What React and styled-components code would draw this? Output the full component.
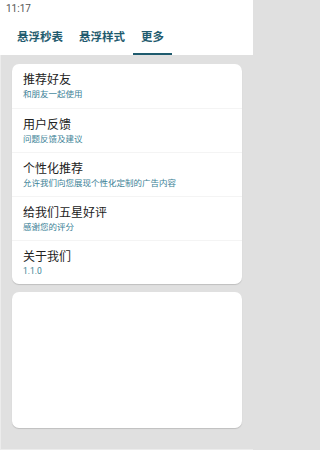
import React from "react";
import styled, { createGlobalStyle } from "styled-components";

const items = [
  { title: "推荐好友", sub: "和朋友一起使用" },
  { title: "用户反馈", sub: "问题反馈及建议" },
  { title: "个性化推荐", sub: "允许我们向您展现个性化定制的广告内容" },
  { title: "给我们五星好评", sub: "感谢您的评分" },
  { title: "关于我们", sub: "1.1.0" },
];

const tabs = ["悬浮秒表", "悬浮样式", "更多"];

function App() {
  return (
    <>
      <GlobalStyle />
      <Page>
        <Header>
          <StatusBar>11:17</StatusBar>
          <TabBar>
            {tabs.map((t, i) => (
              <Tab key={t} active={i === 2}>
                {t}
              </Tab>
            ))}
          </TabBar>
        </Header>
        <Content>
          <Card>
            {items.map((it) => (
              <Item key={it.title}>
                <Title>{it.title}</Title>
                <Sub>{it.sub}</Sub>
              </Item>
            ))}
          </Card>
          <EmptyCard />
        </Content>
      </Page>
    </>
  );
}

const GlobalStyle = createGlobalStyle`
  html, body {
    margin: 0;
    padding: 0;
    background: #e0e0e0;
  }
  body {
    font-family: Roboto, "Noto Sans CJK SC", "Noto Sans", sans-serif;
  }
`;

const Page = styled.div`
  width: 253px;
  height: 450px;
  display: flex;
  flex-direction: column;
  background: #e0e0e0;
  overflow: hidden;
`;

const Header = styled.div`
  background: #fff;
  height: 55px;
  display: flex;
  flex-direction: column;
`;

const StatusBar = styled.div`
  height: 18px;
  padding: 2px 0 0 6px;
  box-sizing: border-box;
  font-size: 10px;
  line-height: 14px;
  color: #555;
`;

const TabBar = styled.div`
  flex: 1;
  display: flex;
  padding-left: 9px;
`;

const Tab = styled.div`
  padding: 0 8px;
  display: flex;
  align-items: center;
  font-size: 11.5px;
  font-weight: 700;
  color: #1f5b6e;
  border-bottom: 2px solid ${(p) => (p.active ? "#1f5b6e" : "transparent")};
  box-sizing: border-box;
`;

const Content = styled.div`
  flex: 1;
  display: flex;
  flex-direction: column;
  gap: 8px;
  padding: 9px 11px 0;
  border-left: 1px solid #ececec;
  border-bottom: 1px solid #ececec;
`;

const Card = styled.div`
  background: #fff;
  border-radius: 7px;
  box-shadow: 0 1px 1px rgba(0, 0, 0, 0.15);
  overflow: hidden;
`;

const Item = styled.div`
  height: 44px;
  padding: 8px 11px 0;
  box-sizing: border-box;
  border-top: 1px solid #f4f4f4;

  &:first-child {
    border-top: none;
  }
`;

const Title = styled.div`
  font-size: 12px;
  line-height: 16px;
  color: #222;
`;

const Sub = styled.div`
  font-size: 8.5px;
  line-height: 13px;
  color: #3b7f96;
`;

const EmptyCard = styled(Card)`
  height: 136px;
`;

export default App;
